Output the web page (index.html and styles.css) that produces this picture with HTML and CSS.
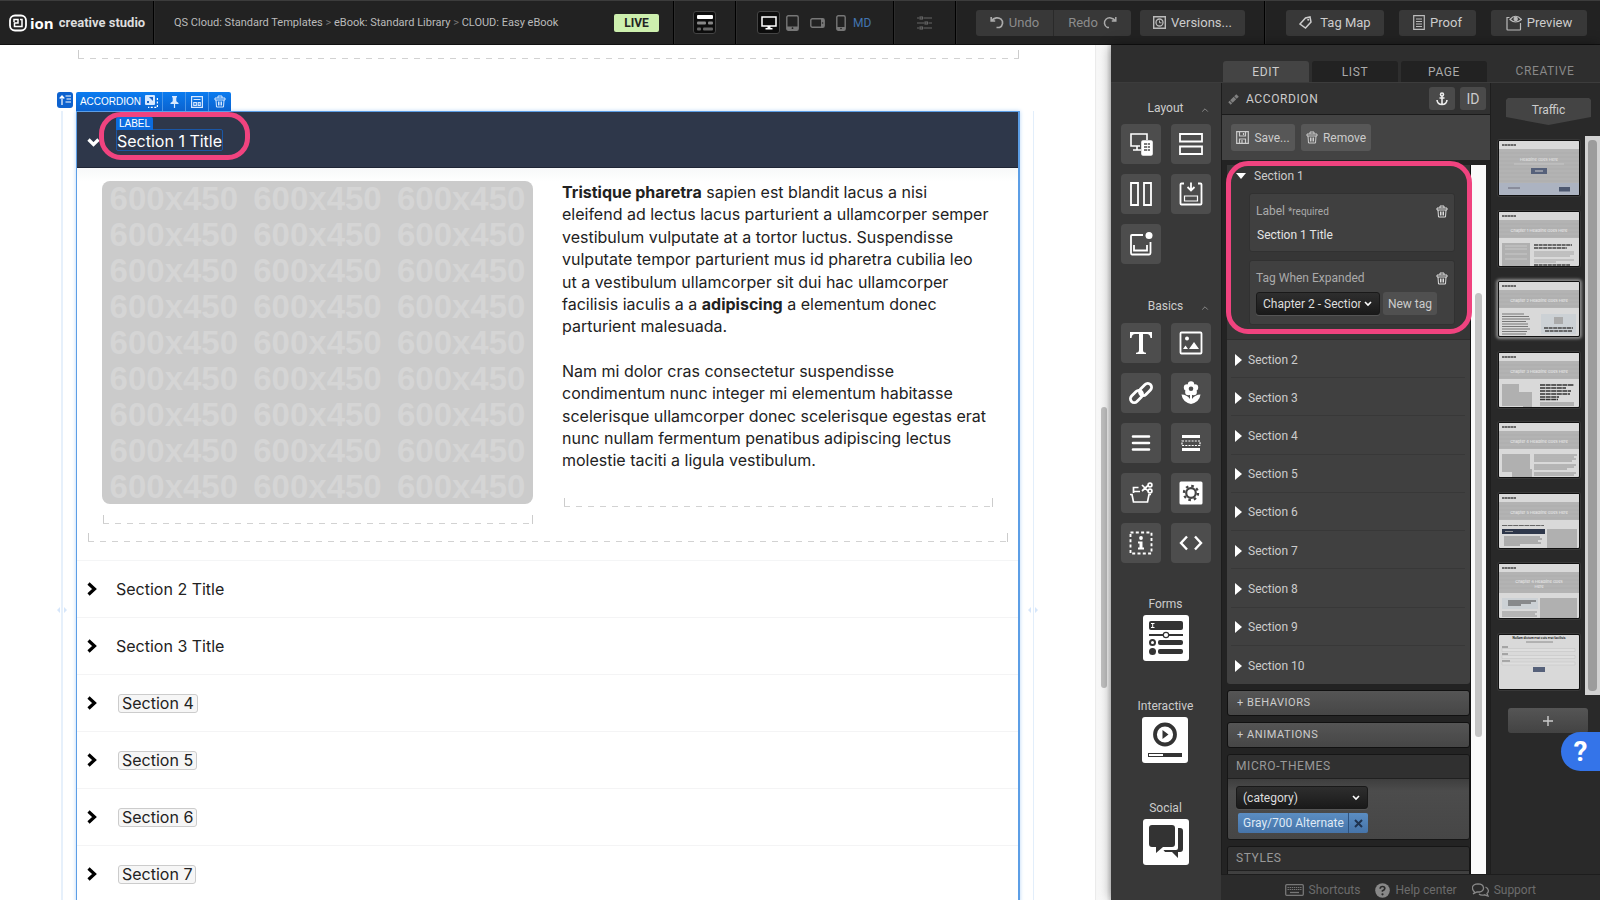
FILE: index.html
```html
<!DOCTYPE html>
<html lang="en">
<head>
<meta charset="utf-8">
<title>ion creative studio</title>
<link rel="stylesheet" href="styles.css">
</head>
<body>
<svg class="defs" aria-hidden="true">
  <symbol id="trash" viewBox="0 0 12 13"><path d="M1 3h10v2H1zM4 3V1h4v2M2 5l.5 7h7L10 5M4.500 6.500v4M6 6.500v4M7.500 6.500v4" fill="none" stroke="currentColor" stroke-width="1"/></symbol>
  <symbol id="caret" viewBox="0 0 10 10"><path d="M1.500 7 5 3.500 8.500 7" fill="none" stroke="currentColor" stroke-width="1"/></symbol>
  <symbol id="chev" viewBox="0 0 12 14"><path d="m2.500 1.500 6 5.500-6 5.500" fill="none" stroke="currentColor" stroke-width="3.200"/></symbol>
  <symbol id="thumb-head" viewBox="0 0 80 26">
    <rect width="80" height="26" fill="#b3b3b3"/><rect width="80" height="8" fill="#d9d9d9"/>
    <path d="M0 12h80M0 16h80M0 20h80M0 24h80" stroke="#ababab" stroke-width=".5"/>
    <path d="M3 4h14" stroke="#444" stroke-width="1.600" stroke-dasharray="2.500 .4"/>
  </symbol>
</svg>

<header class="topbar">
  <div class="cell brand">
    <svg width="18" height="18" viewBox="0 0 18 18" fill="none" stroke="#fff" stroke-width="1.800"><rect x="1" y="1.500" width="16" height="15" rx="5"/><path d="M5 8V5.500h4V9H5.500v3.500H8M11 5.500h2v7H8" stroke-width="1.500"/></svg>
    <span class="brand-name">ion</span><span class="brand-sub">creative studio</span>
  </div>
  <nav class="cell crumbs">
    <p><a href="#">QS Cloud: Standard Templates</a> <i>&gt;</i> <a href="#">eBook: Standard Library</a> <i>&gt;</i> <a href="#">CLOUD: Easy eBook</a></p>
    <span class="live">LIVE</span>
  </nav>
  <div class="cell one">
    <button class="sq on" aria-label="Layout"><svg width="16" height="16" viewBox="0 0 16 16"><rect y="0" width="16" height="4" rx="1" fill="#fff"/><rect y="6.500" width="9" height="3" rx="1" fill="#888"/><rect x="11" y="6.500" width="5" height="3" rx="1" fill="#888"/><rect y="12.500" width="4" height="3" rx="1" fill="#666"/><rect x="6" y="12.500" width="10" height="3" rx="1" fill="#666"/></svg></button>
  </div>
  <div class="cell devices">
    <button class="sq on" aria-label="Desktop"><svg width="16" height="14" viewBox="0 0 16 14"><path d="M1 1h14v9H1z" fill="none" stroke="#fff" stroke-width="1.500"/><path d="M6.500 10h3v2h2v1.500h-7V12h2z" fill="#fff"/></svg></button>
    <button class="dev" aria-label="Tablet"><svg width="13" height="16" viewBox="0 0 13 16"><rect x=".8" y=".8" width="11.400" height="14.400" rx="1.500" fill="none" stroke="#777" stroke-width="1.400"/><path d="M1 11.500h11V15H1z" fill="#777"/><circle cx="6.500" cy="13.200" r=".9" fill="#222"/></svg></button>
    <button class="dev" aria-label="Landscape phone"><svg width="15" height="10" viewBox="0 0 15 10"><rect x=".8" y=".8" width="13.400" height="8.400" rx="1.500" fill="none" stroke="#777" stroke-width="1.400"/><path d="M11 1h3v8h-3z" fill="#777"/><circle cx="12.600" cy="5" r=".8" fill="#222"/></svg></button>
    <button class="dev" aria-label="Phone"><svg width="10" height="16" viewBox="0 0 10 16"><rect x=".8" y=".8" width="8.400" height="14.400" rx="1.500" fill="none" stroke="#777" stroke-width="1.400"/><path d="M1 12h8v3H1z" fill="#777"/><circle cx="5" cy="13.500" r=".8" fill="#222"/></svg></button>
    <span class="md">MD</span>
  </div>
  <div class="cell one">
    <button class="dev" aria-label="Settings"><svg width="16" height="14" viewBox="0 0 16 14" fill="none" stroke="#666" stroke-width="1.100"><path d="M0 2h2M6.500 2H15M0 7h7M11.500 7H15M0 12h2M6.500 12H15"/><rect x="3" y="1" width="2.500" height="2"/><rect x="8" y="6" width="2.500" height="2"/><rect x="3" y="11" width="2.500" height="2"/></svg></button>
  </div>
  <div class="cell history">
    <div class="pair">
      <button class="tb dim"><svg width="14" height="13" viewBox="0 0 14 13" fill="none" stroke="#aaa" stroke-width="1.700"><path d="M1.200 1v4h4M1.500 5C4 1.500 8.500 1 11 3.200s2 7-1.500 8.300H6.500"/></svg>Undo</button>
      <button class="tb dim">Redo<svg width="14" height="13" viewBox="0 0 14 13" fill="none" stroke="#aaa" stroke-width="1.500"><path d="M12.800 1v4h-4M12.500 5C10 1.500 5.500 1 3 3.200s-2 7 1.500 8.300h1.500"/></svg></button>
    </div>
    <button class="tb versions"><svg width="13" height="13" viewBox="0 0 13 13" fill="none" stroke="#bbb"><path d="M.7.700h11.600v11.600H.7z" stroke-width="1.400"/><circle cx="6.500" cy="6.500" r="3.500" stroke-width="1.300"/><path d="M6.500 4.500v2.300h2"/></svg>Versions...</button>
  </div>
  <div class="cell actions">
    <button class="tb tagmap"><svg width="13" height="13" viewBox="0 0 13 13"><path d="M1 8 6.500 2 11 1l1 5-5.500 6Z" fill="none" stroke="#ccc" stroke-width="1.500"/><circle cx="9.200" cy="3.800" r="1" fill="#ccc"/></svg>Tag Map</button>
    <button class="tb proof"><svg width="12" height="15" viewBox="0 0 12 15" fill="none" stroke="#bbb" stroke-width="1.200"><path d="M.7.700h10.600v13.600H.7zM3 4h6M3 6.500h6M3 9h6M3 11.500h6"/></svg>Proof</button>
    <button class="tb preview"><svg width="16" height="16" viewBox="0 0 16 16" fill="none" stroke="#bbb" stroke-width="1.200"><path d="M3.500 2.500H1v11.800q0 .7.700.7h12.100q.7 0 .7-.7V8M4 4.500Q9.500-2 15.500 4.500 9.500 9.500 4 4.500Z"/><circle cx="9.700" cy="4" r="1.600" fill="#bbb"/></svg>Preview</button>
  </div>
</header>

<div class="workspace">
  <main class="canvas">
    <div class="dash top-dash"></div>
    <section class="selection">
      <svg class="handle handle-l" width="10" height="6" viewBox="0 0 10 6" fill="#d6e6fa"><path d="M0 3l3-3v6zM10 3 7 0v6z"/></svg>
      <svg class="handle handle-r" width="10" height="6" viewBox="0 0 10 6" fill="#d6e6fa"><path d="M0 3l3-3v6zM10 3 7 0v6z"/></svg>
      <button class="move" aria-label="Move up"><svg width="12" height="12" viewBox="0 0 12 12" fill="none" stroke="#fff" stroke-width="1.200"><path d="M3 11V2M.7 4.500 3 2l2.300 2.500M6.500 2H12M7.500 5H12M6.500 8H12"/></svg></button>
      <div class="tools">
        <button class="tool name">ACCORDION<svg width="13" height="13" viewBox="0 0 13 13"><rect width="10" height="10" rx="1" fill="#d6e8ff"/><path d="M2 8 5 5M4 2h4v4zM2 6h2v2H2z" fill="#1a63c8"/><path d="M12.400 3v9.400H3" fill="none" stroke="#fff" stroke-width="1.200" stroke-dasharray="2 1.500"/></svg></button>
        <button class="tool" aria-label="Pin"><svg width="9" height="12" viewBox="0 0 9 12" fill="#d6e8ff"><path d="M2 0h5v1l-.7.700v3.500L8.500 7v1H5.100v4H3.900V8H.5V7l2.200-1.800V1.700L2 1z"/></svg></button>
        <button class="tool" aria-label="Theme"><svg width="12" height="12" viewBox="0 0 12 12" fill="none" stroke="#d6e8ff" stroke-width="1.200"><path d="M.6.600h10.800v10.800H.6zM2.500 3.500h7M2.800 6.500h2.500v3H2.800zM7.200 6.500h2v3h-2z"/></svg></button>
        <button class="tool" aria-label="Delete"><svg width="12" height="13"><use href="#trash"/></svg></button>
      </div>
      <div class="accordion">
        <div class="acc-head">
          <svg class="down" width="13" height="9" viewBox="0 0 13 9"><path d="m1.500 1.500 5 5 5-5" fill="none" stroke="#fff" stroke-width="3.200"/></svg>
          <span class="label-box">Section 1 Title<span class="label-tag">LABEL</span></span>
          <span class="ring ring-label"></span>
        </div>
        <div class="acc-body">
          <div class="cols">
            <div class="col">
              <div class="ph">
                <span>600x450</span><span>600x450</span><span>600x450</span><span>600x450</span><span>600x450</span><span>600x450</span><span>600x450</span><span>600x450</span><span>600x450</span><span>600x450</span><span>600x450</span><span>600x450</span><span>600x450</span><span>600x450</span><span>600x450</span><span>600x450</span><span>600x450</span><span>600x450</span><span>600x450</span><span>600x450</span><span>600x450</span><span>600x450</span><span>600x450</span><span>600x450</span><span>600x450</span><span>600x450</span><span>600x450</span>
              </div>
              <div class="dash img-dash"></div>
            </div>
            <div class="col">
              <p><strong>Tristique pharetra</strong> sapien est blandit lacus a nisi<br>eleifend ad lectus lacus parturient a ullamcorper semper vestibulum vulputate at a tortor luctus. Suspendisse vulputate tempor parturient mus id pharetra cubilia leo<br>ut a vestibulum ullamcorper sit dui hac ullamcorper facilisis iaculis a a <strong>adipiscing</strong> a elementum donec parturient malesuada.</p>
              <p>Nam mi dolor cras consectetur suspendisse condimentum nunc integer mi elementum habitasse scelerisque ullamcorper donec scelerisque egestas erat nunc nullam fermentum penatibus adipiscing lectus molestie taciti a ligula vestibulum.</p>
              <div class="dash text-dash"></div>
            </div>
          </div>
          <div class="dash row-dash"></div>
        </div>
        <div class="acc-row"><svg width="12" height="14"><use href="#chev"/></svg><span>Section 2 Title</span></div>
        <div class="acc-row"><svg width="12" height="14"><use href="#chev"/></svg><span>Section 3 Title</span></div>
        <div class="acc-row"><svg width="12" height="14"><use href="#chev"/></svg><span class="hint">Section 4</span></div>
        <div class="acc-row"><svg width="12" height="14"><use href="#chev"/></svg><span class="hint">Section 5</span></div>
        <div class="acc-row"><svg width="12" height="14"><use href="#chev"/></svg><span class="hint">Section 6</span></div>
        <div class="acc-row"><svg width="12" height="14"><use href="#chev"/></svg><span class="hint">Section 7</span></div>
      </div>
    </section>
  </main>
  <div class="main-scroll"><div class="main-thumb"></div></div>

  <aside class="side">
    <div class="tabs">
      <button class="tab active">EDIT</button>
      <button class="tab">LIST</button>
      <button class="tab">PAGE</button>
      <span class="creative-title">CREATIVE</span>
    </div>

    <div class="palette">
      <h3>Layout<svg width="8" height="8"><use href="#caret"/></svg></h3>
      <div class="tiles layout-tiles">
        <button class="tile" aria-label="Responsive"><svg viewBox="0 0 24 24" fill="none" stroke="#fff" stroke-width="1.600"><path d="M11 14H2V2h16v6M8 14v4M4 18h8"/><rect x="13" y="9" width="10" height="14" rx="1" fill="#fff"/><path d="M15 12h6M15 15h6M15 18h6" stroke="#4d4d4d" stroke-width="1.400" stroke-dasharray="3 .7"/></svg></button>
        <button class="tile" aria-label="Rows"><svg viewBox="0 0 24 24" fill="none" stroke="#fff" stroke-width="1.800"><path d="M1 2h22v7.500H1zM1 14.500h22V22H1z"/></svg></button>
        <button class="tile" aria-label="Columns"><svg viewBox="0 0 24 24" fill="none" stroke="#fff" stroke-width="1.800"><path d="M2 1h7v22H2zM15 1h7v22h-7z"/></svg></button>
        <button class="tile" aria-label="Insert container"><svg viewBox="0 0 24 24" fill="none" stroke="#fff" stroke-width="1.800"><path d="M5 1.500H2.500q-1 0-1 1v19q0 1 1 1h19q1 0 1-1v-19q0-1-1-1H19M12 .5V8M8.500 5 12 8.500 15.500 5"/><path d="M5.500 14h13v5h-13z" stroke-width="1.200"/></svg></button>
        <button class="tile" aria-label="Lightbox"><svg viewBox="0 0 24 24" fill="none" stroke="#fff" stroke-width="1.800"><path d="M14 3H3q-1 0-1 1v17q0 1.500 1 1.500h17q1.500 0 1.500-1.500V10M5 13v5.500h13V13"/><circle cx="20" cy="3.500" r="3.500" fill="#fff" stroke="none"/></svg></button>
      </div>
      <h3>Basics<svg width="8" height="8"><use href="#caret"/></svg></h3>
      <div class="tiles basic-tiles">
        <button class="tile" aria-label="Text"><svg viewBox="0 0 24 24" fill="#fff"><path d="M1 1h22v6h-1.500C21 4 20 3 18 3h-4v16c0 2 1 2.500 3 2.700V23H7v-1.300c2-.2 3-.7 3-2.700V3H6C4 3 3 4 2.500 7H1z"/></svg></button>
        <button class="tile" aria-label="Image"><svg viewBox="0 0 24 24"><rect x="1.500" y="1.500" width="21" height="21" rx="1" fill="none" stroke="#fff" stroke-width="1.800"/><circle cx="8" cy="7.500" r="2" fill="#fff"/><path d="m10 18 5-7 5 7zM4 18l2.500-3.500L9 18z" fill="#fff"/></svg></button>
        <button class="tile" aria-label="Link"><svg viewBox="0 0 24 24" fill="none" stroke="#fff" stroke-width="2.800"><rect x="9.500" y="4.700" width="14" height="7.600" rx="3.800" transform="rotate(-45 16.500 8.500)"/><rect x=".5" y="11.700" width="14" height="7.600" rx="3.800" transform="rotate(-45 7.500 15.500)"/></svg></button>
        <button class="tile" aria-label="Shape"><svg viewBox="0 0 24 24" fill="#fff"><circle cx="12" cy="3.500" r="3.200"/><circle cx="8" cy="6.500" r="3.200"/><circle cx="16" cy="6.500" r="3.200"/><circle cx="9.300" cy="11" r="3.200"/><circle cx="14.700" cy="11" r="3.200"/><circle cx="12" cy="7.800" r="2.300" fill="#4d4d4d"/><path d="M11 13h2v5q3-4.500 8.500-4.500-1 7.500-9.500 9.500-8.500-2-9.500-9.500Q8 13.500 11 18z"/></svg></button>
        <button class="tile" aria-label="List"><svg viewBox="0 0 24 24" stroke="#fff" stroke-width="2.600" stroke-linecap="round"><path d="M4 5.500h16M4 12h16M4 18.500h16"/></svg></button>
        <button class="tile" aria-label="Spacer"><svg viewBox="0 0 24 24" stroke="#fff" fill="none"><path d="M3 5.500h18M3 18.500h18" stroke-width="2.800"/><path d="M3 10h18v4.500H3z" stroke-width="1.200" stroke-dasharray="2 1.200"/></svg></button>
        <button class="tile" aria-label="Clipboard"><svg viewBox="0 0 24 24" fill="none" stroke="#fff" stroke-width="1.700"><path d="M9.500 6.500H4.500V12M11 10.500H4.500M1 13.500h2l1.500 7.500h14l1.500-7.500h2M13 4l6 6M13 10l6-5.500"/><circle cx="21" cy="4" r="1.900"/><circle cx="21" cy="10" r="1.900"/></svg></button>
        <button class="tile" aria-label="Widget"><svg viewBox="0 0 24 24"><rect x=".5" y=".5" width="23" height="23" rx="1.500" fill="#fff"/><circle cx="12" cy="12" r="4.800" fill="none" stroke="#444" stroke-width="2.200"/><circle cx="12" cy="12" r="7" fill="none" stroke="#444" stroke-width="2.400" stroke-dasharray="2.600 2.900"/></svg></button>
        <button class="tile" aria-label="Info"><svg viewBox="0 0 24 24"><rect x="1.500" y="1.500" width="21" height="21" fill="none" stroke="#fff" stroke-width="1.900" stroke-dasharray="3 2.300"/><circle cx="12" cy="7" r="1.900" fill="#fff"/><path d="M9 10.500h4.500v6H15v2H9v-2h1.500v-4H9z" fill="#fff"/></svg></button>
        <button class="tile" aria-label="Code"><svg viewBox="0 0 24 24" fill="none" stroke="#fff" stroke-width="2.400"><path d="M8 5.500 2 12l6 6.500M16 5.500l6 6.500-6 6.500"/></svg></button>
      </div>
      <div class="groups">
        <button class="group"><span>Forms</span><svg viewBox="0 0 46 46"><rect width="46" height="46" rx="3" fill="#fff"/><g fill="#333"><rect x="6" y="6" width="34" height="9" rx="2"/><path d="M6 19h34v2H6z"/><rect x="15" y="25" width="25" height="5" rx="2"/><rect x="15" y="34" width="25" height="5" rx="2"/><circle cx="9.500" cy="36.500" r="3.500"/></g><circle cx="23" cy="20" r="2.700" fill="#fff" stroke="#333" stroke-width="1.200"/><circle cx="9.500" cy="27.500" r="2.500" fill="#fff" stroke="#333" stroke-width="2"/><path d="M8 8.500h3.500M9.700 8.500v4M8 12.500h3.500" stroke="#fff"/></svg></button>
        <button class="group"><span>Interactive</span><svg viewBox="0 0 46 46"><rect width="46" height="46" rx="3" fill="#fff"/><circle cx="23" cy="17.500" r="10" fill="none" stroke="#333" stroke-width="3.800"/><path d="m20.500 13 6 4.500-6 4.500z" fill="#333"/><rect x="6" y="36" width="34" height="4" fill="#333"/><rect x="7" y="37" width="14" height="2" fill="#fff"/></svg></button>
        <button class="group"><span>Social</span><svg viewBox="0 0 46 46"><rect width="46" height="46" rx="3" fill="#fff"/><path d="M9 6h20q3 0 3 3v16q0 3-3 3h-9l-7 6v-6H9q-3 0-3-3V9q0-3 3-3zM35 9h2q3 0 3 3v18q0 3-3 3h-2v6l-6-6h-7l-1.500-2H33q2 0 2-2z" fill="#333"/></svg></button>
      </div>
    </div>

    <div class="editor">
      <div class="ed-title">
        <svg width="12" height="12" viewBox="0 0 12 12"><path d="M1.500 10.500 10 2" stroke="#808080" stroke-width="3.500" stroke-dasharray="2 .7 5 .7 3"/></svg>
        <h2>ACCORDION</h2>
        <button class="mini" aria-label="Anchor"><svg width="12" height="14" viewBox="0 0 12 14" fill="none" stroke="#eee" stroke-width="1.600"><circle cx="6" cy="2.500" r="1.500"/><path d="M6 4v8.500M3.500 6h5M1 8q.5 4.500 5 4.500T11 8"/></svg></button>
        <button class="mini">ID</button>
      </div>
      <div class="ed-actions">
        <button class="act save"><svg width="13" height="13" viewBox="0 0 13 13" fill="none" stroke="#ccc" stroke-width="1.200"><path d="M.7.700h11.600v11.600H.7zM3.500 1v4h6V1M7.500 2v2M3.500 12V8h6v4M6 9v3"/></svg>Save...</button>
        <button class="act remove"><svg width="12" height="13"><use href="#trash"/></svg>Remove</button>
      </div>
      <div class="ed-main">
        <div class="ed-list">
          <div class="sections">
            <div class="sec-open">
              <div class="sec-h"><i class="tri-d"></i>Section 1</div>
              <div class="card">
                <div class="card-h"><label for="lab">Label <small>*required</small></label><button class="bin" aria-label="Delete label"><svg width="12" height="13"><use href="#trash"/></svg></button></div>
                <input id="lab" type="text" value="Section 1 Title">
              </div>
              <div class="card card-tag">
                <div class="card-h"><label for="tag">Tag When Expanded</label><button class="bin" aria-label="Delete tag"><svg width="12" height="13"><use href="#trash"/></svg></button></div>
                <div class="tagline">
                  <div class="sel"><select id="tag"><option>Chapter 2 - Section 1</option></select><svg width="8" height="6" viewBox="0 0 8 6"><path d="m1 1 3 3 3-3" fill="none" stroke="#fff" stroke-width="1.600"/></svg></div>
                  <button class="newtag">New tag</button>
                </div>
              </div>
            </div>
            <ul>
              <li><i class="tri"></i>Section 2</li><li><i class="tri"></i>Section 3</li><li><i class="tri"></i>Section 4</li><li><i class="tri"></i>Section 5</li><li><i class="tri"></i>Section 6</li><li><i class="tri"></i>Section 7</li><li><i class="tri"></i>Section 8</li><li><i class="tri"></i>Section 9</li><li><i class="tri"></i>Section 10</li>
            </ul>
          </div>
          <button class="fold">+ BEHAVIORS</button>
          <button class="fold">+ ANIMATIONS</button>
          <div class="box">
            <h4>MICRO-THEMES</h4>
            <div class="box-b">
              <div class="sel cat"><select aria-label="Category"><option>(category)</option></select><svg width="8" height="6" viewBox="0 0 8 6"><path d="m1 1 3 3 3-3" fill="none" stroke="#fff" stroke-width="1.600"/></svg></div>
              <div class="chip"><span>Gray/700 Alternate</span><button aria-label="Remove theme"><svg width="9" height="9" viewBox="0 0 9 9"><path d="m1 1 7 7M8 1 1 8" stroke="#1f3350" stroke-width="2"/></svg></button></div>
            </div>
          </div>
          <div class="box">
            <h4>STYLES</h4>
            <div class="box-b"></div>
          </div>
        </div>
        <div class="ed-scroll"><div class="ed-thumb"></div></div>
      </div>
    </div>

    <div class="creative">
      <button class="traffic">Traffic</button>
      <div class="pages">
        <div class="thumbs">
          <svg class="th" viewBox="0 0 80 54"><rect width="80" height="54" fill="#b3b3b3"/><rect width="80" height="8" fill="#d9d9d9"/><path d="M0 12h80M0 16h80M0 20h80M0 24h80M0 28h80M0 32h80M0 36h80M0 40h80" stroke="#ababab" stroke-width=".5"/><path d="M3 4h14" stroke="#444" stroke-width="1.600" stroke-dasharray="2.500 .4"/><text x="40" y="20" font-size="4" text-anchor="middle" fill="#e8e8e8">Headline Goes Here</text><path d="M15 23h50" stroke="#c6c6c6"/><rect x="32" y="27" width="16" height="6" fill="#56617a"/><path d="M36 30h8" stroke="#ccc"/><rect y="42" width="80" height="12" fill="#acb3c1"/><path d="M9 47h12" stroke="#667"/><rect x="60" y="46" width="11" height="4.500" fill="#4d5870"/></svg>
          <svg class="th" viewBox="0 0 80 54"><rect width="80" height="54" fill="#d9d9d9"/><use href="#thumb-head" width="80" height="26"/><text x="40" y="20" font-size="4" text-anchor="middle" fill="#eee">Chapter 1 Headline Goes Here</text><rect x="3" y="31" width="28" height="23" fill="#b0b0b0"/><path d="M6 34h22M6 37h22M6 42h22M6 47h22" stroke="#bcbcbc" stroke-width="2"/><path d="M35 33h38M35 36h33M35 53h36" stroke="#444" stroke-width="1.400" stroke-dasharray="4 .6"/><path d="M35 40h40M35 42h40M35 44h36M35 48h40M35 50h22" stroke="#999" stroke-width=".8"/></svg>
          <svg class="th current" viewBox="0 0 80 54"><rect width="80" height="54" fill="#d9d9d9"/><use href="#thumb-head" width="80" height="26"/><text x="40" y="20" font-size="4" text-anchor="middle" fill="#eee">Chapter 2 Headline Goes Here</text><path d="M3 32h22M3 34.500h27M3 37h28M3 39.500h24M3 42h26M3 44.500h26M3 47h28M3 49.500h25M3 52h24" stroke="#777" stroke-width="1"/><rect x="42" y="32" width="35" height="20" fill="#ccd1d5"/><rect x="55" y="35" width="9" height="7" fill="#aaa"/><path d="M45 46h29M46 49h27" stroke="#444" stroke-width="1.300" stroke-dasharray="4 .6"/></svg>
          <svg class="th" viewBox="0 0 80 54"><rect width="80" height="54" fill="#d9d9d9"/><use href="#thumb-head" width="80" height="26"/><text x="40" y="20" font-size="4" text-anchor="middle" fill="#eee">Chapter 3 Headline Goes Here</text><path d="M3 31h17v8h13v15h-9v-1H3z" fill="#b0b0b0"/><path d="M41 32h34M41 35h26M41 38h31M41 41h30M41 44h19M41 46.500h18" stroke="#333" stroke-width="1.500" stroke-dasharray="5 .6"/><path d="M41 50h34M41 52h34" stroke="#888"/></svg>
          <svg class="th" viewBox="0 0 80 54"><rect width="80" height="54" fill="#d9d9d9"/><use href="#thumb-head" width="80" height="26"/><text x="40" y="20" font-size="4" text-anchor="middle" fill="#eee">Chapter 4 Headline Goes Here</text><path d="M3 31h28v15h2v8H13v-5H3z" fill="#b0b0b0"/><path d="M35 32h43M35 34h40M35 36h42M35 38h38M35 42h42M35 44h40M35 46h33M35 50h42M35 52h40" stroke="#888" stroke-width=".9"/></svg>
          <svg class="th" viewBox="0 0 80 54"><rect width="80" height="54" fill="#d9d9d9"/><use href="#thumb-head" width="80" height="26"/><text x="40" y="20" font-size="4" text-anchor="middle" fill="#eee">Chapter 5 Headline Goes Here</text><path d="M3 31.500h42" stroke="#666" stroke-width="1.200" stroke-dasharray="5 .6"/><rect x="3" y="35" width="43" height="5" fill="#2e374a"/><path d="M6 37.500h8" stroke="#aaa" stroke-width=".8"/><path d="M5 43h36M5 45h38M5 47h34M5 49h37M5 51h16" stroke="#777" stroke-width=".9"/><rect x="48" y="35" width="30" height="19" fill="#b0b0b0"/></svg>
          <svg class="th" viewBox="0 0 80 54"><rect width="80" height="54" fill="#d9d9d9"/><use href="#thumb-head" width="80" height="26"/><rect y="25" width="80" height="4" fill="#b3b3b3"/><text x="40" y="19" font-size="4" text-anchor="middle" fill="#eee">Chapter 6 Headline Goes</text><text x="40" y="24" font-size="4" text-anchor="middle" fill="#eee">Here</text><rect x="3" y="34" width="36" height="11" fill="#ccd1d5"/><path d="M9 37h28M9 39h23M9 41h13" stroke="#444" stroke-width="1.200"/><path d="M3 48h35M3 50h33M3 52h35" stroke="#888" stroke-width=".9"/><rect x="41" y="34" width="37" height="20" fill="#b0b0b0"/></svg>
          <svg class="th" viewBox="0 0 80 54"><rect width="80" height="54" fill="#d9d9d9"/><text x="40" y="4" font-size="3" font-weight="700" text-anchor="middle" fill="#222">Nullam dictum erat cuis erat facilisis</text><path d="M27 7h27" stroke="#777" stroke-width=".8"/><path d="M3 12h6M3 19h6M3 26h8" stroke="#555" stroke-width=".8"/><path d="M3 13.500h73v3H3zM3 20.500h73v3H3zM3 27h73v3H3z" fill="#dedede" stroke="#bbb" stroke-width=".4"/><rect x="34" y="32" width="12" height="5" fill="#56617a"/></svg>
        </div>
        <div class="pg-scroll"><div class="pg-thumb"></div></div>
      </div>
      <button class="add" aria-label="Add page"><svg width="10" height="10" viewBox="0 0 10 10"><path d="M5 0v10M0 5h10" stroke="#ccc" stroke-width="1.400"/></svg></button>
    </div>

    <footer class="foot">
      <a href="#"><svg width="19" height="12" viewBox="0 0 19 12" fill="none" stroke="#777"><rect x=".7" y=".7" width="17.600" height="10.600" rx="1" stroke-width="1.300"/><path d="M2.500 3.500h14M2.500 5.500h14" stroke-width="1.200" stroke-dasharray="1.400 .7"/><path d="M5 8.500h9" stroke-width="1.300"/></svg>Shortcuts</a>
      <a href="#"><svg width="15" height="15" viewBox="0 0 15 15"><circle cx="7.500" cy="7.500" r="7.300" fill="#888"/><path d="M5.200 5.800q0-2.300 2.300-2.300t2.300 2q0 1.500-2.300 2.300v1" fill="none" stroke="#2b2b2b" stroke-width="1.700"/><circle cx="7.500" cy="11.300" r="1.100" fill="#2b2b2b"/></svg>Help center</a>
      <a href="#"><svg width="17" height="14" viewBox="0 0 17 14" fill="none" stroke="#888" stroke-width="1.300"><path d="M3 9.500C-1 6-.5 1 6 .8c6.500 0 7.500 7 1.500 8.200H5l-4 1.800z"/><path d="M13.500 4c3.500 1.500 3.500 5 1.500 6.500l1 2.500-3.500-1.200C10 12.500 8 12 7 11"/></svg>Support</a>
    </footer>

    <span class="ring ring-edit"></span>
    <button class="help" aria-label="Help"><span>?</span></button>
  </aside>
</div>
</body>
</html>
```

FILE: styles.css
```css
* { box-sizing: border-box; }
body { margin: 0; height: 100vh; display: flex; flex-direction: column; overflow: hidden; background: #fff; font: 13px/16px Roboto, "Liberation Sans", sans-serif; color: #ccc; }
button, input, select { font: inherit; color: inherit; border: 0; margin: 0; padding: 0; background: none; }
button { display: flex; align-items: center; justify-content: center; cursor: pointer; }
a { color: inherit; text-decoration: none; }
h2, h3, h4, p, ul { margin: 0; padding: 0; font-weight: 400; font-size: inherit; }
svg { display: block; flex: none; }
.defs { position: absolute; width: 0; height: 0; }

/* Top bar */
.topbar { display: flex; height: 45px; flex: none; background: #222; border-top: 1px solid #3c3c3c; border-bottom: 1px solid #111; }
.cell { display: flex; align-items: center; border-right: 1px solid #000; box-shadow: 1px 0 0 #2c2c2c; }
.cell:last-child { border-right: 0; }
.brand { width: 154px; padding-left: 9px; color: #fff; }
.brand-name { margin-left: 3px; font: 700 15px/18px "Open Sans", sans-serif; }
.brand-sub { margin-left: 5px; font-size: 13px; font-weight: 700; color: #ddd; white-space: nowrap; }
.crumbs { flex: 1; justify-content: space-between; padding: 0 14px 0 20px; font-size: 11px; color: #bbb; white-space: nowrap; }
.crumbs i { font-style: normal; color: #777; }
.live { width: 45px; height: 18px; border-radius: 2px; background: #cdefae; color: #222; font-size: 12px; line-height: 18px; font-weight: 700; text-align: center; }
.one { width: 62px; justify-content: center; }
.sq { width: 23px; height: 23px; border-radius: 3px; background: #0c0c0c; border: 1px solid #444; }
.devices { width: 158px; padding-left: 21px; }
.dev { margin-left: 6px; }
.dev + .dev { margin-left: 11px; }
.one .dev { margin-left: 0; }
.md { margin-left: 7px; font-size: 12px; color: #4274b0; }
.history { width: 309px; padding: 0 19px 0 20px; justify-content: space-between; }
.tb { height: 26px; border-radius: 3px; background: #383838; color: #ccc; gap: 5px; }
.dim { color: #8c8c8c; }
.pair { display: flex; }
.pair .tb { width: 77px; }
.pair .tb:first-child { border-radius: 3px 0 0 3px; border-right: 1px solid #2a2a2a; width: 78px; }
.pair .tb:last-child { border-radius: 0 3px 3px 0; }
.versions { width: 105px; }
.actions { width: 335px; padding: 0 13px 0 21px; gap: 15px; }
.tagmap { width: 98px; gap: 8px; }
.proof { width: 77px; }
.preview { width: 96px; }

/* Canvas */
.workspace { flex: 1; display: flex; min-height: 0; }
.canvas { flex: 1; min-width: 0; padding: 0 61px; overflow: hidden; display: flex; flex-direction: column; color: #222; font: 16px/1.4 Inter, sans-serif; }
.dash { background: repeating-linear-gradient(90deg, #d2d2d2 0 6px, transparent 6px 12px) left bottom / 100% 1px no-repeat, linear-gradient(#ccc, #ccc) left bottom / 1px 9px no-repeat, linear-gradient(#ccc, #ccc) right bottom / 1px 9px no-repeat; }
.top-dash { height: 14px; margin: 0 15px 0 17px; flex: none; }
.selection { position: relative; flex: 1; margin-top: 52px; padding: 0 13px 0 13px; border-left: 2px solid #e6f0fb; border-right: 1px solid #e2eefb; display: flex; flex-direction: column; }
.handle { position: absolute; top: 496px; }
.handle-l { left: -6px; }
.handle-r { right: -5px; }
.move { position: absolute; left: -6px; top: -19px; width: 16px; height: 16px; border-radius: 3px; background: #0d62cf; }
.tools { position: absolute; left: 13px; top: -19px; display: flex; height: 19px; border-radius: 2px 2px 0 0; overflow: hidden; background: linear-gradient(#0b7cf0, #0a62cf); font: 10px/19px "Liberation Sans", sans-serif; color: #fff; }
.tool { width: 23px; border-left: 1px solid #4a95e8; color: #d6e8ff; }
.tool.name { width: 86px; gap: 4px; border: 0; color: #fff; }
.accordion { flex: 1; min-height: 0; border: 1px solid #5c9ee6; border-width: 1px 2px 0 1px; box-shadow: 0 0 4px #b8d6f6; background: #fff; }
.acc-head { position: relative; display: flex; align-items: flex-start; height: 56px; padding: 17px 0 0 10px; background: #2e374a; color: #fff; border-bottom: 1px solid #1f2535; }
.down { margin-top: 9px; }
.label-box { position: relative; margin-left: 16px; height: 22px; line-height: 22px; border: 1px solid #1a56a5; border-radius: 2px; }
.label-tag { position: absolute; left: -1px; top: -13px; width: 37px; height: 13px; background: #0b6cdf; border-radius: 2px 2px 0 0; font: 10px/13px "Liberation Sans", sans-serif; text-align: center; }
.ring { position: absolute; border: 5px solid #f0437f; pointer-events: none; }
.ring-label { left: 22px; top: 0; width: 151px; height: 48px; border-radius: 22px; }
.acc-body { padding: 13px 10px 18px; border-bottom: 1px solid #f4f5f6; background: linear-gradient(#f7f8f9, #fff 14px); }
.cols { display: grid; grid-template-columns: repeat(2, minmax(0, 1fr)); gap: 29px; padding: 0 15px; }
.ph { display: grid; grid-template-columns: repeat(3, 1fr); grid-template-rows: repeat(9, 1fr); height: 323px; border-radius: 8px; background: #cbcbcb; color: #d5d5d5; font: 700 33px/36px "Liberation Sans", sans-serif; text-align: center; overflow: hidden; }
.img-dash { height: 20px; margin-left: 1px; }
.col p + p { margin-top: 22px; }
.text-dash { height: 18px; margin: 17px 0 0 2px; }
.row-dash { height: 18px; margin: 0 0 0 1px; }
.acc-row { display: flex; align-items: center; height: 57px; padding-left: 9px; gap: 18px; border-bottom: 1px solid #f4f4f5; color: #000; }
.acc-row span { color: #222; }
.acc-row .hint { margin-left: 2px; padding: 0 3px; line-height: 17px; border: 1px solid #ccc; border-radius: 3px; background: #f6f6f6; }
.main-scroll { width: 16px; flex: none; padding: 362px 4px 0 5px; background: linear-gradient(90deg, #f7f7f7, #fdfdfd 70%, #e6e6e6); border-left: 1px solid #ebebeb; }
.main-thumb { height: 281px; border-radius: 4px; background: #c1c1c1; }

/* Sidebar frame */
.side { position: relative; width: 489px; flex: none; display: grid; grid-template: 38px minmax(0, 1fr) 26px / 110px 269px 110px; background: #2c2c2c; box-shadow: 0 0 12px rgba(0, 0, 0, .45); }
.tabs { grid-column: 1 / 4; display: flex; align-items: flex-end; gap: 3px; padding-left: 112px; background: #2e2e2e; border-bottom: 1px solid #3c3c3c; letter-spacing: .05em; font-size: 12px; }
.tab { width: 86px; height: 21px; border-radius: 3px 3px 0 0; background: #222; letter-spacing: inherit; color: #aaa; }
.tab.active { background: #444; color: #ccc; }
.creative-title { flex: 1; text-align: center; font-size: 12px; line-height: 22px; color: #888; }

/* Palette */
.palette { grid-row: 2 / 4; padding: 15px 10px 0 9px; background: #383838; font-size: 12px; }
.palette h3 { position: relative; height: 20px; line-height: 20px; text-align: center; }
.palette h3 svg { position: absolute; right: 2px; top: 8px; color: #999; }
.tiles { display: grid; grid-template-columns: 40px 40px; gap: 10px; justify-content: center; margin-top: 6px; }
.layout-tiles { margin-bottom: 32px; }
.basic-tiles { margin-top: 7px; }
.tile { height: 40px; border-radius: 4px; background: #4d4d4d; }
.tile svg { width: 24px; height: 24px; }
.groups { display: flex; flex-direction: column; align-items: center; gap: 37px; margin-top: 33px; }
.group { flex-direction: column; gap: 3px; }
.group span { line-height: 16px; }
.group svg { width: 46px; height: 46px; }

/* Editor */
.editor { display: flex; flex-direction: column; min-height: 0; background: #232323; border-left: 1px solid #1c1c1c; font-size: 12px; }
.ed-title { display: flex; align-items: center; height: 32px; flex: none; padding: 0 4px 0 6px; gap: 5px; background: #313131; border-bottom: 1px solid #1b1b1b; }
.ed-title h2 { flex: 1; letter-spacing: .05em; padding-left: 1px; }
.mini { width: 26px; height: 23px; border-radius: 3px; background: #4a4a4a; font-size: 14px; }
.ed-actions { display: flex; align-items: center; gap: 6px; height: 45px; flex: none; padding-left: 9px; background: #434343; }
.act { height: 27px; gap: 5px; border-radius: 3px; background: #575757; }
.save { width: 64px; }
.remove { width: 70px; }
.ed-main { flex: 1; display: flex; min-height: 0; margin: 5px 4px 0 5px; }
.ed-list { flex: 1; min-width: 0; overflow: hidden; }
.sections { background: #404040; border-radius: 0 0 3px 3px; }
.sec-open { height: 175px; padding: 2px 15px 0 22px; background: #363636; border-bottom: 1px solid #2e2e2e; }
.sec-h { display: flex; align-items: center; height: 18px; gap: 8px; margin: 0 0 8px -13px; }
.tri-d { border: 5px solid transparent; border-top: 6px solid #fff; border-bottom: 0; }
.card { height: 59px; padding: 7px 6px; background: #404040; border: 1px solid #313131; border-radius: 3px; }
.card-tag { margin-top: 8px; height: 65px; }
.card-h { display: flex; justify-content: space-between; align-items: center; height: 20px; color: #aaa; }
.card-h small { font-size: 10px; }
.bin { color: #ddd; }
.card input { width: 100%; height: 20px; margin-top: 4px; padding-left: 1px; color: #e4e4e4; outline: 0; }
.tagline { display: flex; gap: 3px; margin-top: 4px; }
.sel { position: relative; width: 124px; height: 23px; border-radius: 3px; background: linear-gradient(#2e2e2e, #1a1a1a); border: 1px solid #191919; box-shadow: 0 1px 0 #555; color: #ddd; }
.sel select { width: 104px; height: 21px; padding-left: 6px; appearance: none; outline: 0; overflow: hidden; }
.sel svg { position: absolute; right: 7px; top: 8px; }
.newtag { width: 54px; height: 23px; border-radius: 3px; background: #505050; }
.sections ul { display: grid; grid-auto-rows: 1fr; height: 344px; list-style: none; }
.sections li { display: flex; align-items: center; gap: 6px; margin: 0 5px 0 4px; padding: 2px 0 0 4px; border-bottom: 1px solid #383838; }
.sections li:last-child { border: 0; }
.tri { border: 6px solid transparent; border-left: 7px solid #fff; border-right: 0; }
.fold { width: 100%; height: 26px; margin-top: 6px; padding-left: 9px; justify-content: flex-start; border: 1px solid #111; border-radius: 3px; background: linear-gradient(#555, #464646); font-size: 11px; letter-spacing: .05em; }
.box { margin-top: 6px; border: 1px solid #161616; border-radius: 3px; overflow: hidden; }
.box h4 { height: 24px; padding-left: 8px; line-height: 22px; font-size: 12px; letter-spacing: .05em; color: #999; background: #303030; border-bottom: 1px solid #202020; }
.box-b { height: 60px; padding: 7px 8px; background: linear-gradient(#3e3e3e, #4c4c4c 12px, #464646); }
.cat { width: 132px; }
.chip { display: flex; width: 130px; height: 20px; margin: 4px 0 0 2px; border-radius: 2px; background: linear-gradient(#5b8dc2, #4674a9); color: #dfe9f5; line-height: 20px; overflow: hidden; }
.chip span { flex: 1; padding-left: 5px; white-space: nowrap; }
.chip button { width: 20px; border-left: 1px solid #2e5380; }
.ed-scroll { width: 16px; flex: none; padding: 128px 4px 0; background: #fafafa; border-left: 1px solid #111; }
.ed-thumb { height: 444px; border-radius: 4px; background: #c4c4c4; }

/* Creative */
.creative { padding-top: 15px; background: #292929; border-left: 1px solid #1e1e1e; }
.traffic { width: 85px; height: 27px; margin-left: 15px; padding-bottom: 3px; background: #444; font-size: 12px; clip-path: polygon(0 2px, 2px 0, calc(100% - 2px) 0, 100% 2px, 100% 19px, 50% 100%, 0 19px); }
.pages { display: flex; justify-content: space-between; height: 559px; margin-top: 11px; padding-left: 7px; }
.thumbs { display: flex; flex-direction: column; justify-content: space-between; padding: 4px 0 5px; }
.th { width: 82px; height: 56px; border: 1px solid #111; border-radius: 2px; box-shadow: 0 0 0 1px #383838; font-family: Inter, sans-serif; }
.th.current { box-shadow: 0 0 3px 2px #8a8a8a; }
.pg-scroll { width: 15px; padding: 4px 3px; background: #d2d2d2; }
.pg-thumb { height: 551px; border-radius: 4px; background: #9c9c9c; }
.add { width: 80px; height: 25px; margin: 13px 0 0 17px; border-radius: 3px; background: linear-gradient(#555, #434343); }

.foot { grid-column: 2 / 4; display: flex; align-items: center; justify-content: flex-end; gap: 15px; padding: 5px 64px 0 0; border-top: 1px solid #1d1d1d; background: #2b2b2b; color: #6c6c6c; font-size: 12px; }
.foot a { display: flex; align-items: center; gap: 5px; }
.ring-edit { left: 115px; top: 116px; width: 246px; height: 173px; border-radius: 22px; }
.help { position: absolute; right: 0; top: 687px; width: 39px; height: 39px; border-radius: 20px 0 0 20px; background: #3474e9; color: #fff; font-size: 28px; font-weight: 700; }
```
